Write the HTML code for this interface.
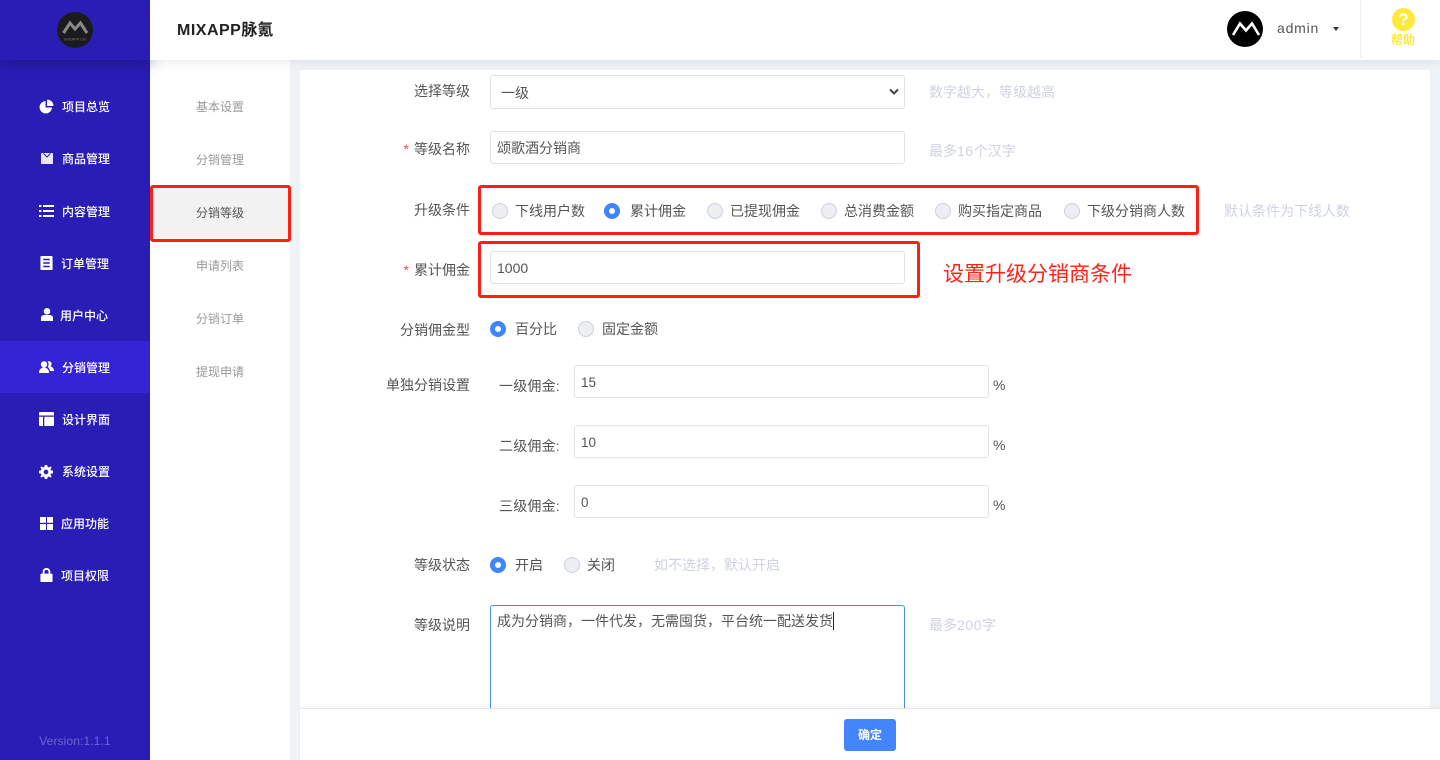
<!DOCTYPE html>
<html lang="zh-CN">
<head>
<meta charset="utf-8">
<title>MIXAPP脉氪</title>
<style>
*{box-sizing:border-box}
html,body{margin:0;padding:0;width:1440px;height:760px;overflow:hidden;background:#f0f3f5;font-family:"Liberation Sans","Noto Sans CJK SC",sans-serif;color:#555}
.a{position:absolute}
.t{position:absolute;white-space:nowrap;line-height:20px;font-size:14px;color:#555}
.lab{position:absolute;right:970px;white-space:nowrap;line-height:20px;font-size:14px;color:#555;text-align:right}
.lab b{color:#f34d4d;font-weight:400;margin-right:5px}
.hint{position:absolute;white-space:nowrap;line-height:20px;font-size:14px;color:#cfd3df}
.hint i{font-style:normal;letter-spacing:.6px}
.box{position:absolute;background:#fff;border:1px solid #e1e4ea;border-radius:3px;font-size:14px;color:#555;padding-left:6px;white-space:nowrap}
.r{position:absolute;width:16px;height:16px;border-radius:50%;background:#eceef2;border:1px solid #ccd1de}
.r.on{background:#fff;border:5px solid #3d86ff}
.rt{position:absolute;white-space:nowrap;line-height:20px;font-size:14px;color:#555}
.red{position:absolute;border:3px solid #ff1f14;border-radius:3px}
.m{position:absolute;left:0;width:150px;height:52px}
.m span{position:absolute;white-space:nowrap;font-size:12px;line-height:20px;top:17px;color:#fff;font-weight:500}
.m svg{position:absolute;fill:#fff}
.s{position:absolute;left:150px;width:140px;text-align:center;font-size:12px;line-height:20px;color:#999}
</style>
</head>
<body>

<!-- main panel -->
<div class="a" style="left:300px;top:70px;width:1130px;height:690px;background:#fff"></div>

<!-- sub sidebar -->
<div class="a" style="left:150px;top:60px;width:140px;height:700px;background:#fff"></div>
<div class="a" style="left:150px;top:186px;width:140px;height:55px;background:#f2f2f2"></div>
<div class="s" style="top:97px">基本设置</div>
<div class="s" style="top:150px">分销管理</div>
<div class="s" style="top:203px;color:#555">分销等级</div>
<div class="s" style="top:256px">申请列表</div>
<div class="s" style="top:309px">分销订单</div>
<div class="s" style="top:362px">提现申请</div>
<div class="red" style="left:150px;top:185px;width:141px;height:57px"></div>

<!-- sidebar -->
<div class="a" style="left:0;top:0;width:150px;height:760px;background:#2a1db5"></div>
<div class="a" style="left:0;top:341px;width:150px;height:52px;background:#3424d6"></div>

<div class="m" style="top:80px"><svg style="left:39px;top:19px" width="15" height="15" viewBox="0 0 16 16"><path d="M7 2.200A6.600 6.600 0 1 0 13.800 9H7z"/><path d="M8.600 .6V7.400H15.400A6.800 6.800 0 0 0 8.600 .6z"/></svg><span style="left:62px">项目总览</span></div>
<div class="m" style="top:132px"><svg style="left:41px;top:21px" width="12" height="11" viewBox="0 0 12 11"><rect width="12" height="11" rx=".8" fill="#e9e7fb"/><path d="M2.500 .5L6 4 9.500 .5" fill="none" stroke="#2a1db5" stroke-width="1"/></svg><span style="left:62px">商品管理</span></div>
<div class="m" style="top:185px"><svg style="left:39px;top:20px" width="15" height="12" viewBox="0 0 15 12"><rect x="0" y="0" width="2.400" height="2"/><rect x="4" y="0" width="11" height="2"/><rect x="0" y="5" width="2.400" height="2"/><rect x="4" y="5" width="11" height="2"/><rect x="0" y="10" width="2.400" height="2"/><rect x="4" y="10" width="11" height="2"/></svg><span style="left:62px">内容管理</span></div>
<div class="m" style="top:237px"><svg style="left:40px;top:19px" width="13" height="14" viewBox="0 0 13 15"><path fill-rule="evenodd" d="M1 0H12a1 1 0 0 1 1 1V14a1 1 0 0 1-1 1H1a1 1 0 0 1-1-1V1A1 1 0 0 1 1 0zM3 3V4.600H10V3zM3 6.700V8.300H10V6.700zM3 10.400V12H10V10.400z"/></svg><span style="left:61px">订单管理</span></div>
<div class="m" style="top:289px"><svg style="left:41px;top:19px" width="12" height="13" viewBox="0 0 12 13"><circle cx="6" cy="3.300" r="3.300"/><path d="M0 13V10C0 8 1.500 7 3.500 7H8.500C10.500 7 12 8 12 10V13z"/></svg><span style="left:60px">用户中心</span></div>
<div class="m" style="top:341px"><svg style="left:39px;top:20px" width="15" height="12" viewBox="0 0 15 12"><circle cx="5" cy="3.400" r="3.200"/><path d="M0 12C0 8.500 2 6.500 5 6.500S10 8.500 10 12z"/><path d="M8.500 .5A2.800 2.800 0 0 1 11.500 5.200C13.800 6 15 7.500 15 10H11C10.600 8 9.800 6.800 8.800 6A4.500 4.500 0 0 0 8.500 .5z"/></svg><span style="left:62px">分销管理</span></div>
<div class="m" style="top:393px"><svg style="left:39px;top:19px" width="15" height="14" viewBox="0 0 15 14"><path d="M1 0H14a1 1 0 0 1 1 1V3.500H0V1A1 1 0 0 1 1 0z"/><path d="M0 4.800H4V14H1a1 1 0 0 1-1-1z"/><path d="M5.300 4.800H15V13a1 1 0 0 1-1 1H5.300z"/></svg><span style="left:62px">设计界面</span></div>
<div class="m" style="top:445px"><svg style="left:39px;top:20px" width="14" height="14" viewBox="0 0 15 15"><path fill-rule="evenodd" d="M6.200 0H8.800L9.200 2.100 10.600 2.700 12.400 1.500 13.500 2.600 12.300 4.400 12.900 5.800 15 6.200V8.800L12.900 9.200 12.300 10.600 13.500 12.400 12.400 13.500 10.600 12.300 9.200 12.900 8.800 15H6.200L5.800 12.900 4.400 12.300 2.600 13.500 1.500 12.400 2.700 10.600 2.100 9.200 0 8.800V6.200L2.100 5.800 2.700 4.400 1.500 2.600 2.600 1.500 4.400 2.700 5.800 2.100zM7.500 5A2.500 2.500 0 1 0 7.500 10 2.500 2.500 0 0 0 7.500 5z"/></svg><span style="left:62px">系统设置</span></div>
<div class="m" style="top:497px"><svg style="left:40px;top:20px" width="13" height="13" viewBox="0 0 13 13"><rect width="6" height="5.800"/><rect x="7" width="6" height="5.800"/><rect y="7" width="6" height="6"/><rect x="7" y="7" width="6" height="6"/></svg><span style="left:61px">应用功能</span></div>
<div class="m" style="top:549px"><svg style="left:40px;top:19px" width="13" height="14" viewBox="0 0 13 15"><path fill-rule="evenodd" d="M6.500 0C9 0 10.600 1.800 10.600 4.200V6H12a1 1 0 0 1 1 1V14a1 1 0 0 1-1 1H1a1 1 0 0 1-1-1V7A1 1 0 0 1 1 6H2.400V4.200C2.400 1.800 4 0 6.500 0zM6.500 2C5 2 4.300 3 4.300 4.300V6H8.700V4.300C8.700 3 8 2 6.500 2z"/></svg><span style="left:61px">项目权限</span></div>

<div class="t" style="left:0;width:150px;text-align:center;top:731px;font-size:12px;color:#6a62d8;letter-spacing:.12px">Version:1.1.1</div>

<!-- sidebar header -->
<div class="a" style="left:0;top:0;width:150px;height:60px;background:#2a1db5;box-shadow:0 4px 14px rgba(15,10,80,.4)"></div>
<div class="a" style="left:57px;top:12px;width:36px;height:36px;border-radius:50%;background:#1b1b1d"></div>
<svg class="a" style="left:57px;top:12px" width="36" height="36" viewBox="0 0 36 36"><path d="M6.500 21L13 11 18 17 23.500 11 30 21" fill="none" stroke="#8a8a8a" stroke-width="3"/><text x="18" y="28.500" font-size="4" fill="#777" text-anchor="middle" font-family="Liberation Sans, sans-serif">MIXAPP.CN</text></svg>

<!-- header -->
<div class="a" style="left:150px;top:0;width:1290px;height:60px;background:#fff;box-shadow:0 2px 10px rgba(60,70,80,.1)"></div>
<div class="t" style="left:177px;top:21px;font-size:16px;font-weight:700;color:#222"><span style="letter-spacing:.5px">MIXAPP</span>脉氪</div>
<div class="a" style="left:1227px;top:11px;width:36px;height:36px;border-radius:50%;background:#000"></div>
<svg class="a" style="left:1227px;top:11px" width="36" height="36" viewBox="0 0 36 36"><path d="M6 24L13 12.500 19 19.500 25 12.500 32 24" fill="none" stroke="#fff" stroke-width="2.600"/></svg>
<div class="t" style="left:1277px;top:18px;font-size:14px;color:#555;letter-spacing:.8px">admin</div>
<div class="a" style="left:1333px;top:27px;width:0;height:0;border-left:3.500px solid transparent;border-right:3.500px solid transparent;border-top:4px solid #333"></div>
<div class="a" style="left:1360px;top:0;width:1px;height:58px;background:#f0f0f0"></div>
<div class="a" style="left:1392px;top:8px;width:23px;height:23px;border-radius:50%;background:#ffe93b;color:#fff;font-weight:700;font-size:17px;line-height:23px;text-align:center">?</div>
<div class="t" style="left:1391px;top:30px;font-size:12px;font-weight:700;color:#ffe93b">帮助</div>

<!-- form -->
<div class="lab" style="top:81px">选择等级</div>
<div class="box" style="left:490px;top:75px;width:415px;height:34px;line-height:34px;padding-left:10px">一级</div>
<svg class="a" style="left:888px;top:88px" width="12" height="8" viewBox="0 0 12 8"><path d="M2 1.500L6 5.500 10 1.500" fill="none" stroke="#444" stroke-width="2"/></svg>
<div class="hint" style="left:929px;top:82px">数字越大，等级越高</div>

<div class="lab" style="top:139px"><b>*</b>等级名称</div>
<div class="box" style="left:490px;top:131px;width:415px;height:33px;line-height:33px">颂歌酒分销商</div>
<div class="hint" style="left:929px;top:141px">最多<i>16</i>个汉字</div>

<div class="lab" style="top:200px">升级条件</div>
<div class="red" style="left:478px;top:185px;width:721px;height:50px"></div>
<div class="r" style="left:492px;top:203px"></div><div class="rt" style="left:515px;top:201px">下线用户数</div>
<div class="r on" style="left:604px;top:203px"></div><div class="rt" style="left:630px;top:201px">累计佣金</div>
<div class="r" style="left:707px;top:203px"></div><div class="rt" style="left:730px;top:201px">已提现佣金</div>
<div class="r" style="left:821px;top:203px"></div><div class="rt" style="left:844px;top:201px">总消费金额</div>
<div class="r" style="left:935px;top:203px"></div><div class="rt" style="left:958px;top:201px">购买指定商品</div>
<div class="r" style="left:1064px;top:203px"></div><div class="rt" style="left:1087px;top:201px">下级分销商人数</div>
<div class="hint" style="left:1224px;top:201px">默认条件为下线人数</div>

<div class="lab" style="top:260px"><b>*</b>累计佣金</div>
<div class="red" style="left:478px;top:241px;width:442px;height:57px"></div>
<div class="box" style="left:490px;top:251px;width:415px;height:33px;line-height:32px">1000</div>
<div class="t" style="left:943px;top:262px;font-size:21px;line-height:26px;color:#ff2216">设置升级分销商条件</div>

<div class="lab" style="top:320px">分销佣金型</div>
<div class="r on" style="left:490px;top:321px"></div><div class="rt" style="left:515px;top:319px">百分比</div>
<div class="r" style="left:578px;top:321px"></div><div class="rt" style="left:602px;top:319px">固定金额</div>

<div class="lab" style="top:375px">单独分销设置</div>
<div class="t" style="left:499px;top:376px;letter-spacing:.2px">一级佣金:</div>
<div class="box" style="left:574px;top:365px;width:415px;height:33px;line-height:34px;font-size:13.500px">15</div>
<div class="t" style="left:993px;top:375px">%</div>
<div class="t" style="left:499px;top:436px;letter-spacing:.2px">二级佣金:</div>
<div class="box" style="left:574px;top:425px;width:415px;height:33px;line-height:34px;font-size:13.500px">10</div>
<div class="t" style="left:993px;top:435px">%</div>
<div class="t" style="left:499px;top:496px;letter-spacing:.2px">三级佣金:</div>
<div class="box" style="left:574px;top:485px;width:415px;height:33px;line-height:34px;font-size:13.500px">0</div>
<div class="t" style="left:993px;top:495px">%</div>

<div class="lab" style="top:555px">等级状态</div>
<div class="r on" style="left:490px;top:557px"></div><div class="rt" style="left:515px;top:555px">开启</div>
<div class="r" style="left:564px;top:557px"></div><div class="rt" style="left:587px;top:555px">关闭</div>
<div class="hint" style="left:654px;top:555px">如不选择，默认开启</div>

<div class="lab" style="top:615px">等级说明</div>
<div class="a" style="left:490px;top:605px;width:415px;height:110px;background:#fff;border:1px solid #4c8bf5;border-radius:3px"></div>
<div class="t" style="left:497px;top:611px">成为分销商，一件代发，无需囤货，平台统一配送发货</div>
<div class="a" style="left:833px;top:612px;width:1px;height:18px;background:#222"></div>
<div class="hint" style="left:929px;top:615px">最多<i>200</i>字</div>

<!-- footer -->
<div class="a" style="left:300px;top:708px;width:1140px;height:52px;background:#fff;border-top:1px solid #e6e6e6;box-shadow:0 -1px 3px rgba(0,0,0,.05)"></div>
<div class="a" style="left:844px;top:719px;width:52px;height:32px;background:#4285ff;border-radius:3px;color:#fff;text-align:center;font-size:12px;font-weight:700;line-height:32px">确定</div>

</body>
</html>
